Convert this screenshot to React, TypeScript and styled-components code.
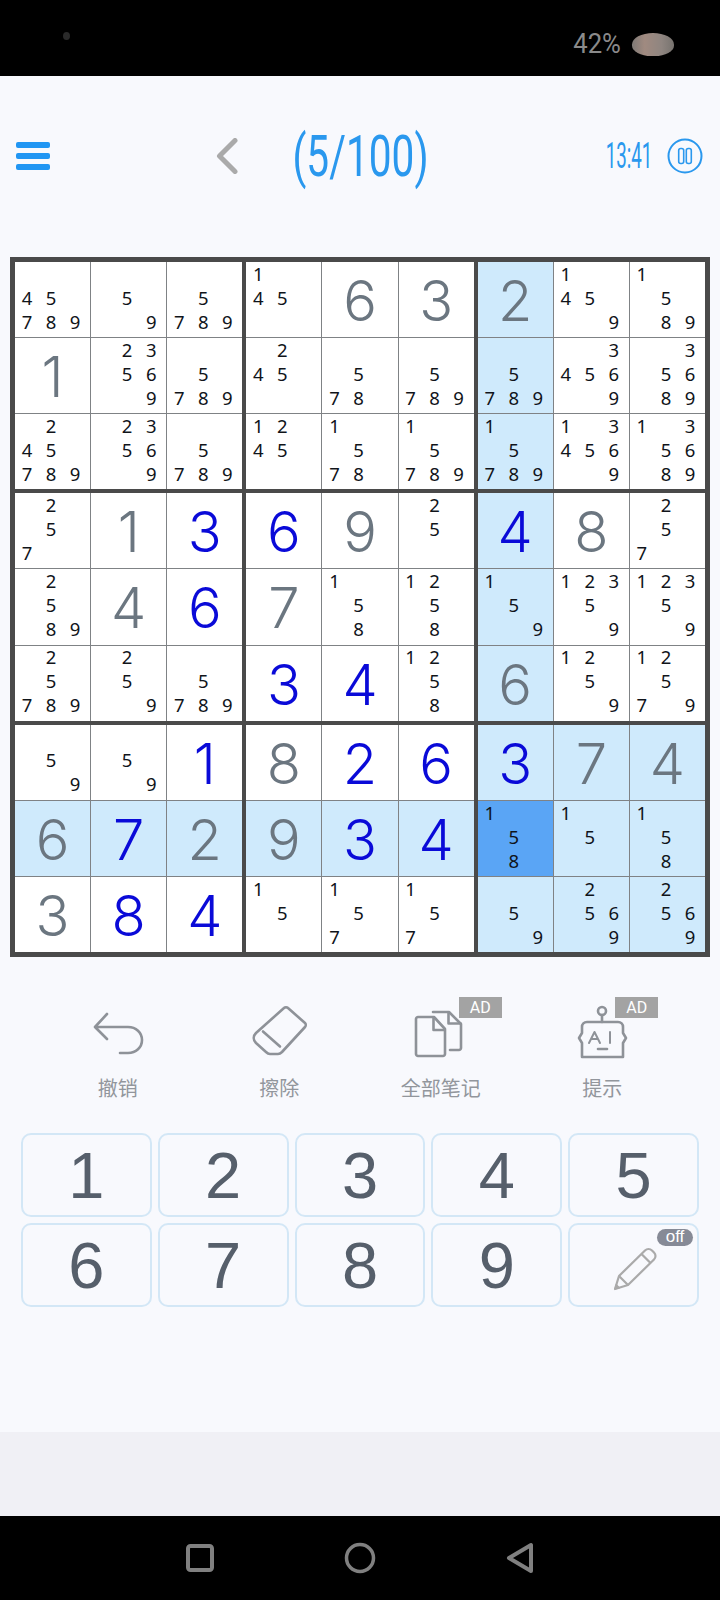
import React from 'react';
import styled, { createGlobalStyle } from 'styled-components';

const GlobalStyle = createGlobalStyle`
  html, body {
    margin: 0;
    padding: 0;
    background: #f8f9fd;
    font-family: 'Noto Sans', 'Noto Sans CJK SC', sans-serif;
  }
`;

const Screen = styled.div`
  width: 720px;
  height: 1600px;
  display: flex;
  flex-direction: column;
  overflow: hidden;
  background: #f8f9fd;
`;

const StatusBar = styled.div`
  height: 76px;
  flex: none;
  background: #000;
  display: flex;
  align-items: center;
  padding: 0 46px 0 63px;
  box-sizing: border-box;
`;

const CameraDot = styled.div`
  width: 7px;
  height: 8px;
  margin-bottom: 4px;
  border-radius: 50%;
  background: #2a2a2a;
`;

const BatteryText = styled.div`
  margin-left: auto;
  margin-top: 12px;
  font-family: 'Roboto', sans-serif;
  font-size: 27px;
  color: #8a8a8a;
  transform: scaleX(0.95);
`;

const BatteryBlob = styled.div`
  width: 42px;
  height: 23px;
  margin-left: 10px;
  margin-top: 12px;
  border-radius: 50% 50% 46% 46%;
  background: linear-gradient(90deg, #7f7a76 0%, #a08a80 30%, #8f8580 70%, #77736f 100%);
`;

const Header = styled.div`
  height: 160px;
  flex: none;
  display: flex;
  align-items: center;
  padding: 0 17px 0 16px;
  box-sizing: border-box;
`;

const MenuButton = styled.svg`
  width: 34px;
  height: 28px;
  flex: none;
`;

const BackButton = styled.svg`
  width: 22px;
  height: 36px;
  flex: none;
  margin-left: 166px;
`;

const Title = styled.div`
  width: 135px;
  margin-left: 55px;
  display: flex;
  justify-content: center;
  font-family: 'Roboto', sans-serif;
  font-weight: 400;
  font-size: 58px;
  line-height: 64px;
  color: #2a98ee;
  white-space: nowrap;
  transform: scaleX(0.7);
`;

const Timer = styled.div`
  width: 46px;
  margin-left: auto;
  display: flex;
  justify-content: center;
  font-family: 'Roboto', sans-serif;
  font-weight: 400;
  font-size: 36px;
  line-height: 36px;
  color: #2a98ee;
  white-space: nowrap;
  transform: scaleX(0.52);
`;

const PauseButton = styled.svg`
  width: 36px;
  height: 36px;
  flex: none;
  margin-left: 15px;
`;

const Board = styled.div`
  width: 700px;
  height: 700px;
  margin: 21px 0 0 10px;
  flex: none;
  box-sizing: border-box;
  border: 5px solid #4a4a4a;
  background: #4a4a4a;
  display: grid;
  grid-template-columns: repeat(3, 1fr);
  grid-template-rows: repeat(3, 1fr);
  gap: 4px;
`;

const Block = styled.div`
  display: grid;
  grid-template-columns: repeat(3, 1fr);
  grid-template-rows: repeat(3, 1fr);
  gap: 1px;
  background: #7f8285;
`;

type Tone = 'plain' | 'peer' | 'selected';

const toneColors: Record<Tone, string> = {
  plain: '#fff',
  peer: '#cfeafc',
  selected: '#5aa5f5',
};

const Cell = styled.div<{ $tone: Tone }>`
  background: ${(p) => toneColors[p.$tone]};
  display: flex;
  align-items: center;
  justify-content: center;
  min-width: 0;
  min-height: 0;
`;

const BigDigit = styled.span<{ $given: boolean }>`
  padding-top: 3px;
  font-family: 'Inter', sans-serif;
  font-weight: 275;
  font-size: 56px;
  line-height: 1;
  color: ${(p) => (p.$given ? '#6b7680' : '#0a0ad8')};
`;

const Marks = styled.div`
  width: 100%;
  height: 100%;
  box-sizing: border-box;
  padding: 0 3px 3px 0;
  display: grid;
  grid-template-columns: repeat(3, 1fr);
  grid-template-rows: repeat(3, 1fr);
`;

const Mark = styled.span`
  display: flex;
  align-items: center;
  justify-content: center;
  font-family: 'Noto Sans', sans-serif;
  font-size: 18.5px;
  line-height: 1;
  color: #10141a;
`;

const Actions = styled.div`
  margin-top: 40px;
  padding: 0 37px;
  height: 113px;
  flex: none;
  display: grid;
  grid-template-columns: repeat(4, 1fr);
`;

const Action = styled.div`
  display: flex;
  flex-direction: column;
  align-items: center;
`;

const ActionIconWrap = styled.div`
  position: relative;
  width: 60px;
  height: 78px;
  display: flex;
  align-items: flex-start;
  justify-content: center;
`;

const ActionIcon = styled.svg`
  width: 60px;
  height: 60px;
  margin-top: 6px;
`;

const AdBadge = styled.div<{ $left: number }>`
  position: absolute;
  top: 0;
  left: ${(p) => p.$left}px;
  width: 43px;
  height: 21px;
  background: #a3a3a3;
  color: #fff;
  font-family: 'Roboto', sans-serif;
  font-size: 16px;
  line-height: 21px;
  text-align: center;
`;

const ActionLabel = styled.div`
  font-family: 'Noto Sans CJK SC', sans-serif;
  font-size: 20px;
  line-height: 26px;
  color: #92969c;
`;

const Keypad = styled.div`
  margin-top: 23px;
  padding: 0 21px;
  flex: none;
  display: grid;
  grid-template-columns: repeat(5, 1fr);
  grid-template-rows: repeat(2, 84px);
  column-gap: 6px;
  row-gap: 6px;
`;

const Key = styled.div`
  position: relative;
  box-sizing: border-box;
  border: 2px solid #d3e7f6;
  border-radius: 10px;
  display: flex;
  align-items: center;
  justify-content: center;
  font-family: 'Liberation Sans', sans-serif;
  font-size: 65px;
  color: #565f6b;
`;

const OffBadge = styled.div`
  position: absolute;
  top: 4px;
  right: 4px;
  width: 36px;
  height: 17px;
  border-radius: 9px;
  background: #868a96;
  color: #fff;
  font-family: 'Liberation Sans', sans-serif;
  font-size: 17px;
  line-height: 15px;
  text-align: center;
`;

const PencilIcon = styled.svg`
  width: 44px;
  height: 44px;
  margin-top: 8px;
  margin-left: 2px;
`;

const Spacer = styled.div`
  flex: 1;
`;

const AdStrip = styled.div`
  height: 84px;
  flex: none;
  background: #f0f0f5;
`;

const NavBar = styled.div`
  height: 84px;
  flex: none;
  background: #000;
  display: grid;
  grid-template-columns: repeat(3, 160px);
  justify-content: center;
  justify-items: center;
  align-items: center;
`;

const NavIcon = styled.svg`
  width: 36px;
  height: 36px;
`;

// g = given digit, b = entered digit, anything else is pencil marks
const rows = [
  ['45789', '59', '5789', '145', 'g6', 'g3', 'g2', '1459', '1589'],
  ['g1', '23569', '5789', '245', '578', '5789', '5789', '34569', '35689'],
  ['245789', '23569', '5789', '1245', '1578', '15789', '15789', '134569', '135689'],
  ['257', 'g1', 'b3', 'b6', 'g9', '25', 'b4', 'g8', '257'],
  ['2589', 'g4', 'b6', 'g7', '158', '1258', '159', '12359', '12359'],
  ['25789', '259', '5789', 'b3', 'b4', '1258', 'g6', '1259', '12579'],
  ['59', '59', 'b1', 'g8', 'b2', 'b6', 'b3', 'g7', 'g4'],
  ['g6', 'b7', 'g2', 'g9', 'b3', 'b4', '158', '15', '158'],
  ['g3', 'b8', 'b4', '15', '157', '157', '59', '2569', '2569'],
];

const SEL_ROW = 7;
const SEL_COL = 6;

const toneOf = (r: number, c: number): Tone => {
  if (r === SEL_ROW && c === SEL_COL) return 'selected';
  if (r === SEL_ROW || c === SEL_COL || (r >= 6 && c >= 6)) return 'peer';
  return 'plain';
};

const SudokuCell: React.FC<{ value: string; tone: Tone }> = ({ value, tone }) => (
  <Cell $tone={tone}>
    {value[0] === 'g' || value[0] === 'b' ? (
      <BigDigit $given={value[0] === 'g'}>{value[1]}</BigDigit>
    ) : (
      <Marks>
        {['1', '2', '3', '4', '5', '6', '7', '8', '9'].map((d) => (
          <Mark key={d}>{value.includes(d) ? d : ''}</Mark>
        ))}
      </Marks>
    )}
  </Cell>
);

const blocks = [0, 1, 2, 3, 4, 5, 6, 7, 8];
const offsets = [0, 1, 2];

const iconStroke = {
  fill: 'none',
  stroke: '#8e9298',
  strokeWidth: 2.6,
  strokeLinecap: 'round' as const,
  strokeLinejoin: 'round' as const,
};

const App: React.FC = () => (
  <Screen>
    <GlobalStyle />
    <StatusBar>
      <CameraDot />
      <BatteryText>42%</BatteryText>
      <BatteryBlob />
    </StatusBar>

    <Header>
      <MenuButton viewBox="0 0 34 28">
        <rect x="0" y="0" width="34" height="6" rx="2" fill="#2196f3" />
        <rect x="0" y="11" width="34" height="6" rx="2" fill="#2196f3" />
        <rect x="0" y="22" width="34" height="6" rx="2" fill="#2196f3" />
      </MenuButton>
      <BackButton viewBox="0 0 22 36">
        <path d="M19 2.5 L3.5 18 L19 33.5" fill="none" stroke="#aaaaaa" strokeWidth="5" strokeLinecap="round" strokeLinejoin="round" />
      </BackButton>
      <Title>(5/100)</Title>
      <Timer>13:41</Timer>
      <PauseButton viewBox="0 0 36 36">
        <circle cx="18" cy="18" r="16.5" fill="none" stroke="#2a98ee" strokeWidth="2" />
        <rect x="11.7" y="10.5" width="5" height="15" rx="2" fill="none" stroke="#2a98ee" strokeWidth="1.6" />
        <rect x="19.3" y="10.5" width="5" height="15" rx="2" fill="none" stroke="#2a98ee" strokeWidth="1.6" />
      </PauseButton>
    </Header>

    <Board>
      {blocks.map((b) => {
        const r0 = Math.floor(b / 3) * 3;
        const c0 = (b % 3) * 3;
        return (
          <Block key={b}>
            {offsets.map((dr) =>
              offsets.map((dc) => (
                <SudokuCell
                  key={`${dr}-${dc}`}
                  value={rows[r0 + dr][c0 + dc]}
                  tone={toneOf(r0 + dr, c0 + dc)}
                />
              )),
            )}
          </Block>
        );
      })}
    </Board>

    <Actions>
      <Action>
        <ActionIconWrap>
          <ActionIcon viewBox="0 0 60 60">
            <path d="M19 11 L7 24 L19 36 M7.5 24 H40 C48 24 54 29.5 54 37 C54 44.5 48 50 40 50 H32" {...iconStroke} />
          </ActionIcon>
        </ActionIconWrap>
        <ActionLabel>撤销</ActionLabel>
      </Action>
      <Action>
        <ActionIconWrap>
          <ActionIcon viewBox="0 0 60 60">
            <path d="M35 5 C36 4 38 4 39 5 L56 20 C57 21 57 23 56 24 L33 49 C32 50 31 51 29 51 H21 C19 51 18 50 17 49 L7 40 C4 37 4 33 7 30 Z" {...iconStroke} />
            <path d="M14 28.5 L31 43.5" {...iconStroke} />
          </ActionIcon>
        </ActionIconWrap>
        <ActionLabel>擦除</ActionLabel>
      </Action>
      <Action>
        <ActionIconWrap>
          <ActionIcon viewBox="0 0 60 60">
            <path d="M7 14 H23 L34 26 V51 C34 52 33 53 32 53 H7 C6 53 5 52 5 51 V16 C5 15 6 14 7 14 Z" {...iconStroke} />
            <path d="M22.5 14.5 V27 H33.5" {...iconStroke} />
            <path d="M22 9 H38 L50 21 V45 C50 46 49 47 48 47 H39" {...iconStroke} />
            <path d="M37.5 9.5 V20.5 H49.5" {...iconStroke} />
          </ActionIcon>
          <AdBadge $left={48}>AD</AdBadge>
        </ActionIconWrap>
        <ActionLabel>全部笔记</ActionLabel>
      </Action>
      <Action>
        <ActionIconWrap>
          <ActionIcon viewBox="0 0 60 60">
            <circle cx="30" cy="8" r="4" {...iconStroke} />
            <path d="M30 12 V19" {...iconStroke} />
            <path d="M15 19 H46 C49 19 51 21 51 24 V30 L54 35 L51 40 V54 H10 V40 L7 35 L10 30 V24 C10 21 12 19 15 19 Z" {...iconStroke} />
            <path d="M17 40 L22.5 29 L28 40 M19 36 H26" {...iconStroke} strokeWidth={2} />
            <path d="M38 29 V40" {...iconStroke} strokeWidth={2} />
            <path d="M26 46 H35" {...iconStroke} />
          </ActionIcon>
          <AdBadge $left={43}>AD</AdBadge>
        </ActionIconWrap>
        <ActionLabel>提示</ActionLabel>
      </Action>
    </Actions>

    <Keypad>
      {['1', '2', '3', '4', '5', '6', '7', '8', '9'].map((d) => (
        <Key key={d}>{d}</Key>
      ))}
      <Key>
        <OffBadge>off</OffBadge>
        <PencilIcon viewBox="0 0 44 44">
          <path d="M2 42 L6 29 L32 3.5 C34 1.5 37 1.5 39 3.5 L41 5.5 C43 7.5 43 10.5 41 12.5 L15 38 Z" fill="none" stroke="#aaaaaa" strokeWidth="2.2" strokeLinejoin="round" />
          <path d="M6 29 L15 38 M28.5 7 L37.5 16" fill="none" stroke="#aaaaaa" strokeWidth="2.2" />
          <path d="M2 42 L3.2 37.5 L6.5 40.8 Z" fill="#aaaaaa" stroke="#aaaaaa" strokeWidth="1.2" strokeLinejoin="round" />
        </PencilIcon>
      </Key>
    </Keypad>

    <Spacer />
    <AdStrip />
    <NavBar>
      <NavIcon viewBox="0 0 36 36">
        <rect x="6" y="6" width="24" height="24" rx="2.5" fill="none" stroke="#808080" strokeWidth="4" />
      </NavIcon>
      <NavIcon viewBox="0 0 36 36">
        <circle cx="18" cy="18" r="13.5" fill="none" stroke="#808080" strokeWidth="3.5" />
      </NavIcon>
      <NavIcon viewBox="0 0 36 36">
        <path d="M29 5 V31 L7 18 Z" fill="none" stroke="#808080" strokeWidth="4" strokeLinejoin="round" />
      </NavIcon>
    </NavBar>
  </Screen>
);

export default App;
